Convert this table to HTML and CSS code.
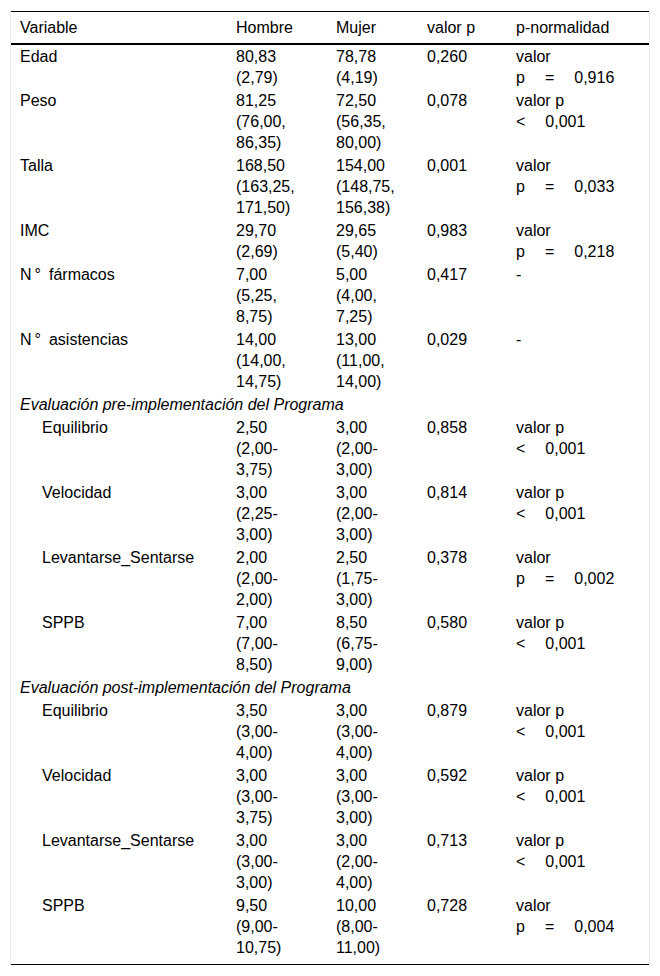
FILE: index.html
```html
<!DOCTYPE html>
<html lang="es">
  <head>
    <meta charset="UTF-8" />
    <meta name="viewport" content="width=device-width, initial-scale=1.0" />
    <title>Tabla</title>
    <link rel="stylesheet" href="styles.css">
  </head>

  <body>
    <div class="tbl_wrap">
      <table class="tbl">
        <colgroup>
          <col class="c_var">
          <col class="c_h">
          <col class="c_m">
          <col class="c_p">
          <col class="c_n">
        </colgroup>
        <thead>
          <tr>
            <th>Variable</th>
            <th>Hombre</th>
            <th>Mujer</th>
            <th>valor p</th>
            <th>p-normalidad</th>
          </tr>
        </thead>
        <tbody>
          <tr>
            <td>Edad</td>
            <td>80,83 (2,79)</td>
            <td>78,78 (4,19)</td>
            <td>0,260</td>
            <td>valor<br><span class="op">p</span><span class="op">=</span>0,916</td>
          </tr>
          <tr>
            <td>Peso</td>
            <td>81,25 (76,00, 86,35)</td>
            <td>72,50 (56,35, 80,00)</td>
            <td>0,078</td>
            <td>valor p<br><span class="op">&lt;</span>0,001</td>
          </tr>
          <tr>
            <td>Talla</td>
            <td>168,50 (163,25, 171,50)</td>
            <td>154,00 (148,75, 156,38)</td>
            <td>0,001</td>
            <td>valor<br><span class="op">p</span><span class="op">=</span>0,033</td>
          </tr>
          <tr>
            <td>IMC</td>
            <td>29,70 (2,69)</td>
            <td>29,65 (5,40)</td>
            <td>0,983</td>
            <td>valor<br><span class="op">p</span><span class="op">=</span>0,218</td>
          </tr>
          <tr>
            <td>N<span class="deg">°</span>fármacos</td>
            <td>7,00 (5,25, 8,75)</td>
            <td>5,00 (4,00, 7,25)</td>
            <td>0,417</td>
            <td>-</td>
          </tr>
          <tr>
            <td>N<span class="deg">°</span>asistencias</td>
            <td>14,00 (14,00, 14,75)</td>
            <td>13,00 (11,00, 14,00)</td>
            <td>0,029</td>
            <td>-</td>
          </tr>
          <tr>
            <td colspan="5" class="section">Evaluación pre-implementación del Programa</td>
          </tr>
          <tr class="sub">
            <td>Equilibrio</td>
            <td>2,50 (2,00-<wbr>3,75)</td>
            <td>3,00 (2,00-<wbr>3,00)</td>
            <td>0,858</td>
            <td>valor p<br><span class="op">&lt;</span>0,001</td>
          </tr>
          <tr class="sub">
            <td>Velocidad</td>
            <td>3,00 (2,25-<wbr>3,00)</td>
            <td>3,00 (2,00-<wbr>3,00)</td>
            <td>0,814</td>
            <td>valor p<br><span class="op">&lt;</span>0,001</td>
          </tr>
          <tr class="sub">
            <td>Levantarse_Sentarse</td>
            <td>2,00 (2,00-<wbr>2,00)</td>
            <td>2,50 (1,75-<wbr>3,00)</td>
            <td>0,378</td>
            <td>valor<br><span class="op">p</span><span class="op">=</span>0,002</td>
          </tr>
          <tr class="sub">
            <td>SPPB</td>
            <td>7,00 (7,00-<wbr>8,50)</td>
            <td>8,50 (6,75-<wbr>9,00)</td>
            <td>0,580</td>
            <td>valor p<br><span class="op">&lt;</span>0,001</td>
          </tr>
          <tr>
            <td colspan="5" class="section">Evaluación post-implementación del Programa</td>
          </tr>
          <tr class="sub">
            <td>Equilibrio</td>
            <td>3,50 (3,00-<wbr>4,00)</td>
            <td>3,00 (3,00-<wbr>4,00)</td>
            <td>0,879</td>
            <td>valor p<br><span class="op">&lt;</span>0,001</td>
          </tr>
          <tr class="sub">
            <td>Velocidad</td>
            <td>3,00 (3,00-<wbr>3,75)</td>
            <td>3,00 (3,00-<wbr>3,00)</td>
            <td>0,592</td>
            <td>valor p<br><span class="op">&lt;</span>0,001</td>
          </tr>
          <tr class="sub">
            <td>Levantarse_Sentarse</td>
            <td>3,00 (3,00-<wbr>3,00)</td>
            <td>3,00 (2,00-<wbr>4,00)</td>
            <td>0,713</td>
            <td>valor p<br><span class="op">&lt;</span>0,001</td>
          </tr>
          <tr class="sub last">
            <td>SPPB</td>
            <td>9,50 (9,00-<wbr>10,75)</td>
            <td>10,00 (8,00-<wbr>11,00)</td>
            <td>0,728</td>
            <td>valor<br><span class="op">p</span><span class="op">=</span>0,004</td>
          </tr>
        </tbody>
      </table>
    </div>
  </body>
</html>
```

FILE: styles.css
```css
* {
  margin: 0;
  padding: 0;
}

body {
  background-color: #fff;
  color: #000;
  font-family: "Liberation Sans", Arial, sans-serif;
  font-size: 16px;
  line-height: 21px;
}

.tbl_wrap {
  margin: 10px 10px 0;
  padding-top: 1px;
  border-left: 1px solid #ebebeb;
  border-right: 1px solid #ebebeb;
}

.tbl {
  width: 100%;
  border-collapse: collapse;
  table-layout: fixed;
  border-top: 1px solid #000;
  border-bottom: 1px solid #000;
}

.c_var {
  width: 216px;
}

.c_h {
  width: 100px;
}

.c_m {
  width: 91px;
}

.c_p {
  width: 89px;
}

.c_n {
  width: 142px;
}

.tbl th {
  padding: 5px 20px 5px 9px;
  text-align: left;
  font-weight: normal;
  border-bottom: 2px solid #000;
}

.tbl td {
  padding: 1px 20px 1px 9px;
  vertical-align: top;
  text-align: left;
}

.tbl .section {
  font-style: italic;
  padding-right: 9px;
}

.tbl .sub td:first-child {
  padding-left: 31px;
}

.tbl .last td {
  padding-bottom: 6px;
}

/* N° con el espaciado del original */
.deg {
  margin: 0 8px 0 3px;
}

.op {
  display: inline-block;
  margin-right: 20px;
}
```
